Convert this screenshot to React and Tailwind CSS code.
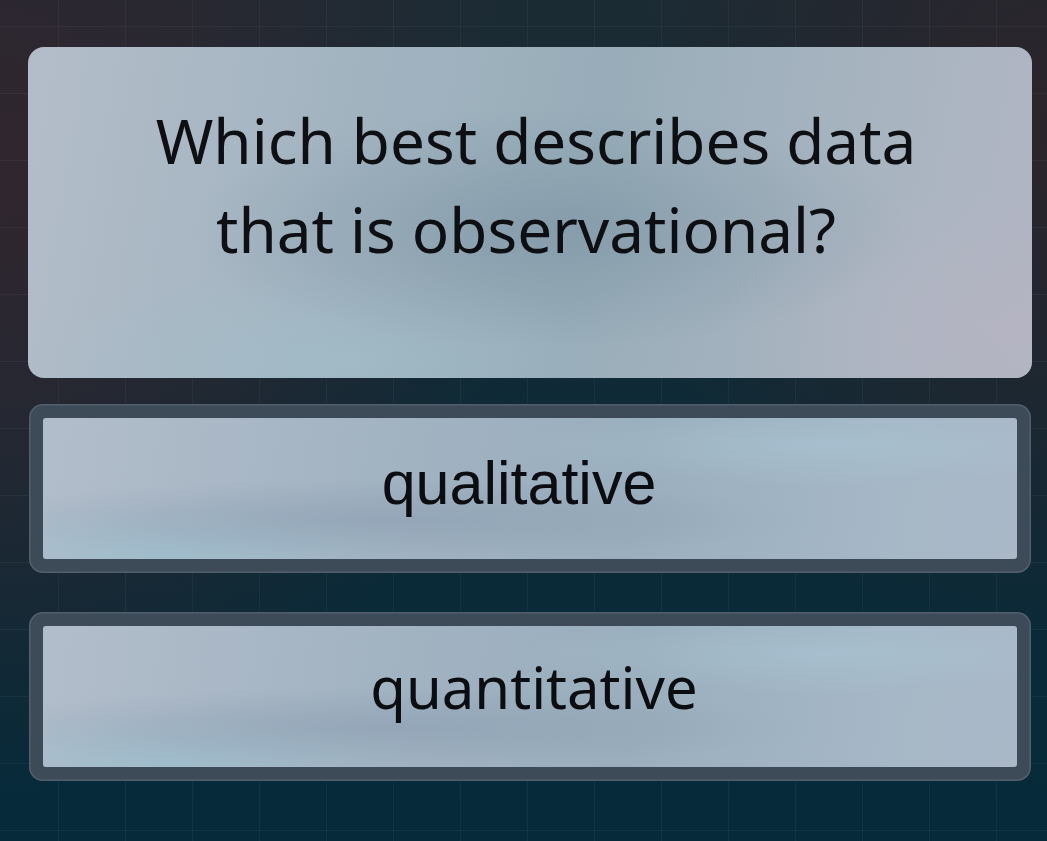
export default function App() {
  const answers = [
    { label: "qualitative", font: "font-['Liberation_Sans',Arial,sans-serif] text-[61px] pr-[22px] pb-[10px]" },
    { label: "quantitative", font: "font-['Noto_Sans',sans-serif] text-[58px] pl-[8px] pb-[20px]" },
  ];

  return (
    <div className="min-h-screen w-full bg-[radial-gradient(ellipse_520px_620px_at_0%_20%,#31262f_0%,rgba(49,38,47,0.6)_45%,rgba(49,38,47,0)_100%),radial-gradient(ellipse_420px_520px_at_100%_15%,#2c242b_0%,rgba(44,36,43,0.5)_50%,rgba(44,36,43,0)_100%),linear-gradient(180deg,#1b2b34_0%,#0d2a37_55%,#062a3a_100%)]">
      <div className="min-h-screen w-full bg-[linear-gradient(90deg,rgba(150,170,190,0.07)_1.5px,transparent_1.5px),linear-gradient(0deg,rgba(150,170,190,0.07)_1.5px,transparent_1.5px)] bg-size-[67px_67px] bg-position-[58px_27px]">
        <div className="flex flex-col pl-[28px] pr-[15px] pt-[47px] pb-[58px] font-['Noto_Sans',sans-serif]">
          {/* question card */}
          <div className="relative h-[331px] overflow-hidden rounded-[16px] bg-[linear-gradient(100deg,#b3bdc9_0%,#a3b4c1_30%,#98adb9_55%,#a7b4c0_80%,#b2b5c3_100%)]">
            <div className="pointer-events-none absolute inset-0 bg-[radial-gradient(ellipse_360px_120px_at_52%_55%,rgba(110,135,152,0.45),rgba(110,135,152,0)_100%),radial-gradient(ellipse_300px_90px_at_30%_95%,rgba(160,195,205,0.45),rgba(160,195,205,0)_100%),radial-gradient(ellipse_260px_140px_at_95%_85%,rgba(185,180,195,0.5),rgba(185,180,195,0)_100%)]" />
            <div className="relative flex flex-col items-center pt-[49px] text-center text-[62px] leading-[89px] text-[#0d0f12]">
              <span className="pl-[12px]">Which best describes data</span>
              <span className="pr-[8px]">that is observational?</span>
            </div>
          </div>

          {/* answer options */}
          <div className="mt-[26px] flex flex-col gap-[39px] px-px">
            {answers.map((a) => (
              <div
                key={a.label}
                className="rounded-[14px] bg-[#3d4a57] p-[14px] shadow-[inset_0_0_0_1.5px_rgba(120,135,150,0.35)]"
              >
                <div className="relative flex h-[141px] items-center justify-center overflow-hidden rounded-[3px] bg-[linear-gradient(100deg,#b2bdcb_0%,#a2b3c2_35%,#9aaebd_60%,#a5b7c6_85%,#aab8c8_100%)]">
                  <div className="pointer-events-none absolute inset-0 bg-[radial-gradient(ellipse_420px_40px_at_35%_72%,rgba(130,150,170,0.45),rgba(130,150,170,0)_100%),radial-gradient(ellipse_260px_50px_at_12%_95%,rgba(150,190,205,0.55),rgba(150,190,205,0)_100%),radial-gradient(ellipse_300px_40px_at_80%_20%,rgba(170,200,215,0.5),rgba(170,200,215,0)_100%)]" />
                  <span className={`relative leading-none text-[#0b0d10] ${a.font}`}>
                    {a.label}
                  </span>
                </div>
              </div>
            ))}
          </div>
        </div>
      </div>
    </div>
  );
}
